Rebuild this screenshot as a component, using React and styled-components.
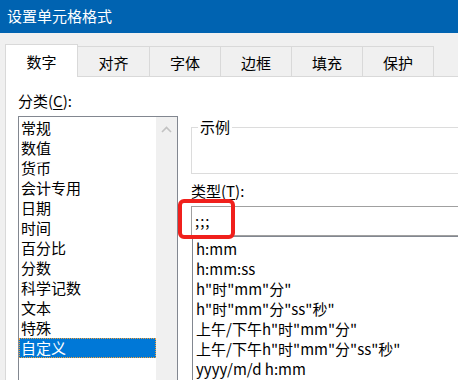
import React from "react";
import styled, { createGlobalStyle } from "styled-components";

const GlobalStyle = createGlobalStyle`
  body {
    margin: 0;
    background: #f0f0f0;
    font-family: "Microsoft YaHei UI", "Noto Sans CJK SC", "Noto Sans", sans-serif;
  }
`;

const tabs = ["数字", "对齐", "字体", "边框", "填充", "保护"];

const categories = [
  "常规",
  "数值",
  "货币",
  "会计专用",
  "日期",
  "时间",
  "百分比",
  "分数",
  "科学记数",
  "文本",
  "特殊",
  "自定义",
];

const formats = [
  "h:mm",
  "h:mm:ss",
  'h"时"mm"分"',
  'h"时"mm"分"ss"秒"',
  '上午/下午h"时"mm"分"',
  '上午/下午h"时"mm"分"ss"秒"',
  "yyyy/m/d h:mm",
];

function App() {
  return (
    <Dialog>
      <GlobalStyle />
      <TitleBar>设置单元格格式</TitleBar>
      <Body>
        <TabStrip>
          {tabs.map((t, i) => (
            <Tab key={t} active={i === 0}>
              {t}
            </Tab>
          ))}
          <TabFill />
        </TabStrip>
        <Panel>
          <LeftColumn>
            <Label>
              分类(<u>C</u>):
            </Label>
            <CategoryBox>
              <CategoryList>
                {categories.map((c) => (
                  <CategoryItem key={c} selected={c === "自定义"}>
                    {c}
                  </CategoryItem>
                ))}
              </CategoryList>
              <ScrollTrack>
                <svg width="11" height="7" viewBox="0 0 11 7">
                  <path
                    d="M1 6 L5.5 1.5 L10 6"
                    fill="none"
                    stroke="#c2c2c2"
                    strokeWidth="1.6"
                  />
                </svg>
              </ScrollTrack>
            </CategoryBox>
          </LeftColumn>
          <RightColumn>
            <SampleGroup>
              <legend>示例</legend>
            </SampleGroup>
            <TypeLabel>
              类型(<u>T</u>):
            </TypeLabel>
            <InputWrap>
              <TypeInput>;;;</TypeInput>
              <Highlight />
            </InputWrap>
            <FormatList>
              {formats.map((f) => (
                <FormatItem key={f}>{f}</FormatItem>
              ))}
            </FormatList>
          </RightColumn>
        </Panel>
      </Body>
    </Dialog>
  );
}

const Dialog = styled.div`
  width: 458px;
  height: 380px;
  overflow: hidden;
  display: flex;
  flex-direction: column;
  background: #f0f0f0;
  color: #000;
  font-size: 15px;
`;

const TitleBar = styled.div`
  height: 33px;
  flex: none;
  box-sizing: border-box;
  display: flex;
  align-items: center;
  padding: 0 0 3px 7px;
  background: #0063b1;
  color: #fff;
  font-size: 15px;
`;

const Body = styled.div`
  flex: 1;
  display: flex;
  flex-direction: column;
  padding: 11px 0 0 5px;
  min-height: 0;
`;

const TabStrip = styled.div`
  display: flex;
  align-items: flex-end;
  height: 33px;
  flex: none;
`;

const Tab = styled.div`
  box-sizing: border-box;
  width: ${(p) => (p.active ? "73px" : "72px")};
  height: ${(p) => (p.active ? "33px" : "31px")};
  margin-left: ${(p) => (p.active ? "0" : "-1px")};
  display: flex;
  align-items: center;
  justify-content: center;
  padding-top: ${(p) => (p.active ? "0" : "1px")};
  border: 1px solid #d9d9d9;
  border-bottom: ${(p) => (p.active ? "none" : "1px solid #d9d9d9")};
  background: ${(p) => (p.active ? "#fff" : "#f0f0f0")};
  position: relative;
  z-index: ${(p) => (p.active ? 1 : 0)};
  &:nth-child(2) {
    margin-left: 0;
    border-left: none;
  }
`;

const TabFill = styled.div`
  flex: 1;
  align-self: stretch;
  border-bottom: 1px solid #d9d9d9;
`;

const Panel = styled.div`
  flex: 1;
  display: grid;
  grid-template-columns: 173px 1fr;
  background: #fff;
  border-left: 1px solid #d9d9d9;
  padding: 14px 0 0 12px;
  min-height: 0;
`;

const LeftColumn = styled.div`
  display: flex;
  flex-direction: column;
  min-height: 0;
`;

const Label = styled.div`
  height: 20px;
  line-height: 20px;
  white-space: nowrap;
  u {
    text-underline-offset: 2px;
  }
`;

const TypeLabel = styled(Label)`
  margin-top: 7px;
`;

const CategoryBox = styled.div`
  margin: 5px 0 0 0;
  width: 160px;
  flex: 1;
  box-sizing: border-box;
  display: flex;
  border: 1px solid #828790;
  border-bottom: none;
`;

const CategoryList = styled.div`
  flex: 1;
  padding-top: 1px;
`;

const CategoryItem = styled.div`
  height: 20px;
  line-height: 20px;
  padding-left: 2px;
  box-sizing: border-box;
  background: ${(p) => (p.selected ? "#0078d7" : "transparent")};
  color: ${(p) => (p.selected ? "#fff" : "#000")};
  outline: ${(p) => (p.selected ? "1px dotted #f3a13a" : "none")};
  outline-offset: -1px;
`;

const ScrollTrack = styled.div`
  width: 21px;
  background: #f0f0f0;
  display: flex;
  justify-content: center;
  padding-top: 9px;
  box-sizing: border-box;
`;

const RightColumn = styled.div`
  display: flex;
  flex-direction: column;
  padding-top: 26px;
  min-width: 0;
`;

const SampleGroup = styled.fieldset`
  margin: 0;
  padding: 0;
  height: 57px;
  flex: none;
  box-sizing: border-box;
  border: 1px solid #dcdcdc;
  border-right: none;
  legend {
    margin-left: 6px;
    padding: 0 2px;
    line-height: 20px;
    height: 20px;
  }
`;

const InputWrap = styled.div`
  position: relative;
  margin-top: 5px;
`;

const TypeInput = styled.div`
  height: 30px;
  box-sizing: border-box;
  border: 1px solid #a0a0a0;
  border-right: none;
  padding: 0 0 0 3px;
  line-height: 28px;
  letter-spacing: 1px;
`;

const Highlight = styled.div`
  position: absolute;
  left: -13px;
  top: -7px;
  width: 57px;
  height: 40px;
  box-sizing: border-box;
  border: 4px solid #f0201c;
  border-radius: 6px;
`;

const FormatList = styled.div`
  flex: 1;
  margin-left: 1px;
  border-left: 1px solid #828790;
  border-top: 1px solid #828790;
  padding: 2px 0 0 3px;
`;

const FormatItem = styled.div`
  height: 20px;
  line-height: 20px;
  white-space: nowrap;
`;

export default App;
